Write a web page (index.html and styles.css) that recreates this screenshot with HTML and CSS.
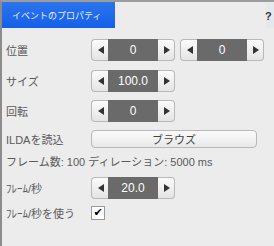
FILE: index.html
```html
<!DOCTYPE html>
<html lang="ja">
<head>
<meta charset="utf-8">
<link rel="stylesheet" href="styles.css">
</head>
<body>
<div class="panel">
  <div class="header">
    <div class="tab">イベントのプロパティ</div>
    <div class="help">?</div>
  </div>
  <div class="rows">
    <div class="row r1">
      <span class="label">位置</span>
      <div class="spinner">
        <span class="btn left"><i class="arr-l"></i></span>
        <span class="field">0</span>
        <span class="btn right"><i class="arr-r"></i></span>
      </div>
      <div class="spinner second">
        <span class="btn left"><i class="arr-l"></i></span>
        <span class="field">0</span>
        <span class="btn right"><i class="arr-r"></i></span>
      </div>
    </div>
    <div class="row r2">
      <span class="label">サイズ</span>
      <div class="spinner">
        <span class="btn left"><i class="arr-l"></i></span>
        <span class="field">100.0</span>
        <span class="btn right"><i class="arr-r"></i></span>
      </div>
    </div>
    <div class="row r3">
      <span class="label">回転</span>
      <div class="spinner">
        <span class="btn left"><i class="arr-l"></i></span>
        <span class="field">0</span>
        <span class="btn right"><i class="arr-r"></i></span>
      </div>
    </div>
    <div class="row r4">
      <span class="label">ILDAを読込</span>
      <button class="browse">ブラウズ</button>
    </div>
    <div class="row r5">
      <span class="info">フレーム数: 100 ディレーション: 5000 ms</span>
    </div>
    <div class="row r6">
      <span class="label">ﾌﾚｰﾑ/秒</span>
      <div class="spinner">
        <span class="btn left"><i class="arr-l"></i></span>
        <span class="field">20.0</span>
        <span class="btn right"><i class="arr-r"></i></span>
      </div>
    </div>
    <div class="row r7">
      <span class="label">ﾌﾚｰﾑ/秒を使う</span>
      <span class="check">✔</span>
    </div>
  </div>
</div>
</body>
</html>
```
FILE: styles.css
```css
html, body {
  margin: 0;
  padding: 0;
  background: #ececec;
}
body {
  font-family: "Liberation Sans", "Noto Sans CJK JP", sans-serif;
}
.panel {
  width: 274px;
  height: 246px;
  box-sizing: border-box;
  border-top: 2px solid #9c9c9c;
  border-left: 2px solid #8c8c8c;
  background: #ececec;
  display: flex;
  flex-direction: column;
}
.header {
  height: 26px;
  display: flex;
  justify-content: space-between;
  align-items: stretch;
}
.tab {
  width: 113px;
  background: linear-gradient(#2c74ec, #1560e9);
  color: #e8f0ff;
  font-size: 9px;
  font-family: "Noto Sans CJK JP", sans-serif;
  display: flex;
  align-items: center;
  padding-left: 10px;
  box-sizing: border-box;
}
.help {
  width: 8px;
  background: #e6e9ec;
  font-size: 11px;
  font-weight: bold;
  color: #333;
  display: flex;
  align-items: center;
  justify-content: flex-start;
  margin-top: 1px;
  text-indent: -1px;
}
.rows {
  display: flex;
  flex-direction: column;
  padding-left: 4px;
}
.row {
  display: flex;
  align-items: center;
}
.r1 { margin-top: 11px; height: 22px; }
.r2 { margin-top: 9px; height: 22px; }
.r3 { margin-top: 8px; height: 22px; }
.r4 { margin-top: 8px; height: 18px; }
.r5 { margin-top: 6px; height: 14px; }
.r6 { margin-top: 9px; height: 22px; }
.r7 { margin-top: 7px; height: 14px; }
.label {
  width: 85px;
  font-size: 11px;
  color: #5a5a5a;
  white-space: nowrap;
}
.info {
  font-size: 11px;
  color: #5a5a5a;
  white-space: nowrap;
}
.spinner {
  display: flex;
  height: 22px;
  width: 84px;
}
.spinner.second {
  margin-left: 5px;
}
.btn {
  width: 17px;
  height: 22px;
  box-sizing: border-box;
  background: linear-gradient(#fbfbfb, #e4e4e4);
  border: 1px solid #b8b8b8;
  display: flex;
  align-items: center;
  justify-content: center;
}
.btn.left {
  border-radius: 4px 0 0 4px;
  border-right: none;
}
.btn.right {
  border-radius: 0 4px 4px 0;
  border-left: none;
}
.arr-l {
  width: 0;
  height: 0;
  border-top: 4px solid transparent;
  border-bottom: 4px solid transparent;
  border-right: 6px solid #333;
  margin-left: 1px;
}
.arr-r {
  width: 0;
  height: 0;
  border-top: 4px solid transparent;
  border-bottom: 4px solid transparent;
  border-left: 6px solid #333;
  margin-left: 1px;
}
.field {
  width: 50px;
  height: 22px;
  background: #6a6a6a;
  color: #fff;
  font-size: 12px;
  display: flex;
  align-items: center;
  justify-content: center;
}
.browse {
  width: 166px;
  height: 18px;
  margin: 0;
  padding: 0;
  box-sizing: border-box;
  border: 1px solid #b8b8b8;
  border-radius: 4px;
  background: linear-gradient(#fbfbfb, #e8e8e8);
  font-family: "Noto Sans CJK JP", sans-serif;
  font-size: 11px;
  color: #444;
  line-height: 16px;
}
.check {
  width: 14px;
  height: 14px;
  box-sizing: border-box;
  border: 1px solid #9a9a9a;
  background: #fff;
  font-size: 11px;
  line-height: 12px;
  color: #000;
  display: flex;
  align-items: center;
  justify-content: center;
  font-family: "DejaVu Sans", sans-serif;
}
```
